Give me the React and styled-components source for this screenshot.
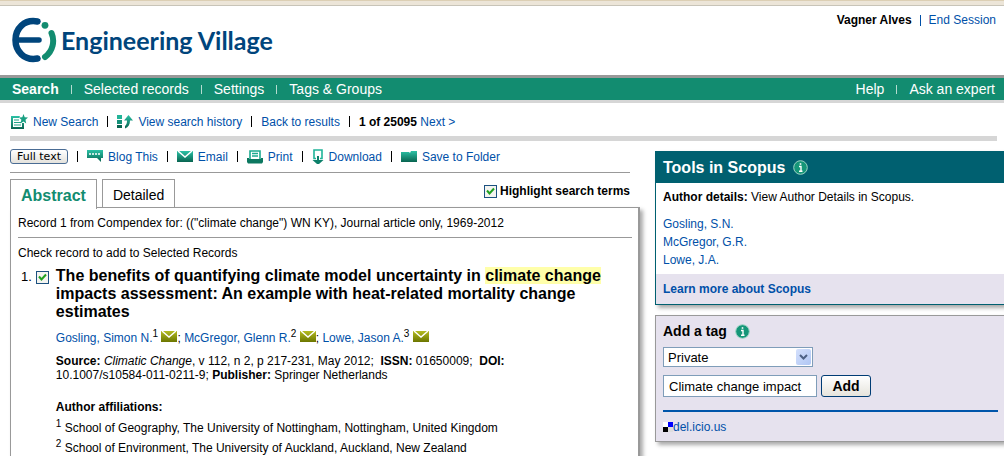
import { useState } from "react"
import styled, { createGlobalStyle } from "styled-components"

const authors = [
    { name: "Gosling, Simon N.", ref: "1" },
    { name: "McGregor, Glenn R.", ref: "2" },
    { name: "Lowe, Jason A.", ref: "3" },
]

const App = () => {
    const [highlight, setHighlight] = useState(true)
    const [tag, setTag] = useState("Climate change impact")

    return (
        <Page>
            <GlobalStyle />
            <Gradients />
            <TopStrip />
            <Header>
                <Logo href="#">
                    <LogoMark />
                    Engineering Village
                </Logo>
                <Session>
                    <b>Vagner Alves</b>
                    <Separator $color="#0050a8" />
                    <Link href="#">End Session</Link>
                </Session>
            </Header>
            <Nav>
                <NavGroup>
                    <NavLink href="#" $active>Search</NavLink>
                    <NavLink href="#">Selected records</NavLink>
                    <NavLink href="#">Settings</NavLink>
                    <NavLink href="#">Tags &amp; Groups</NavLink>
                </NavGroup>
                <NavGroup>
                    <NavLink href="#">Help</NavLink>
                    <NavLink href="#">Ask an expert</NavLink>
                </NavGroup>
            </Nav>
            <SearchBar>
                <IconLink href="#"><NewSearchIcon />New Search</IconLink>
                <Separator />
                <IconLink href="#"><HistoryIcon />View search history</IconLink>
                <Separator />
                <Link href="#">Back to results</Link>
                <Separator />
                <span><b>1 of 25095</b> <Link href="#">Next &gt;</Link></span>
            </SearchBar>
            <Columns>
                <Record>
                    <Actions>
                        <FullText type="button">Full text</FullText>
                        <Separator />
                        <IconLink href="#"><BlogIcon />Blog This</IconLink>
                        <Separator />
                        <IconLink href="#"><EmailIcon />Email</IconLink>
                        <Separator />
                        <IconLink href="#"><PrintIcon />Print</IconLink>
                        <Separator />
                        <IconLink href="#"><DownloadIcon />Download</IconLink>
                        <Separator />
                        <IconLink href="#"><FolderIcon />Save to Folder</IconLink>
                    </Actions>
                    <Tabs>
                        <Tab type="button" $active>Abstract</Tab>
                        <Tab type="button">Detailed</Tab>
                        <Highlight>
                            <Check
                                type="checkbox"
                                checked={highlight}
                                onChange={(e) => setHighlight(e.target.checked)}
                            />
                            Highlight search terms
                        </Highlight>
                    </Tabs>
                    <Panel>
                        <Query>Record 1 from Compendex for: (("climate change") WN KY), Journal article only, 1969-2012</Query>
                        <Hint>Check record to add to Selected Records</Hint>
                        <Entry>
                            <Picker>
                                1.
                                <Check type="checkbox" defaultChecked aria-label="Select record 1" />
                            </Picker>
                            <div>
                                <Title>
                                    The benefits of quantifying climate model uncertainty in <Mark $on={highlight}>climate change</Mark> impacts
                                    assessment: An example with heat-related mortality change estimates
                                </Title>
                                <Authors>
                                    {authors.map((a, i) => (
                                        <span key={a.ref}>
                                            {i > 0 && "; "}
                                            <Link href="#">{a.name}</Link>
                                            <Sup>{a.ref}</Sup> <MailIcon />
                                        </span>
                                    ))}
                                </Authors>
                                <Source>
                                    <b>Source:</b> <i>Climatic Change</i>, v 112, n 2, p 217-231, May 2012;&nbsp; <b>ISSN:</b> 01650009;&nbsp;{" "}
                                    <b>DOI:</b> <NoBreak>10.1007/s10584-011-0211-9;</NoBreak> <b>Publisher:</b> Springer Netherlands
                                </Source>
                                <Subhead>Author affiliations:</Subhead>
                                <Affiliation><Sup>1</Sup> School of Geography, The University of Nottingham, Nottingham, United Kingdom</Affiliation>
                                <Affiliation><Sup>2</Sup> School of Environment, The University of Auckland, Auckland, New Zealand</Affiliation>
                            </div>
                        </Entry>
                    </Panel>
                </Record>
                <Sidebar>
                    <Scopus>
                        <ScopusTitle>Tools in Scopus <InfoIcon /></ScopusTitle>
                        <ScopusBody>
                            <b>Author details:</b> View Author Details in Scopus.
                            <AuthorList>
                                <li><Link href="#">Gosling, S.N.</Link></li>
                                <li><Link href="#">McGregor, G.R.</Link></li>
                                <li><Link href="#">Lowe, J.A.</Link></li>
                            </AuthorList>
                        </ScopusBody>
                        <ScopusFooter><Link href="#">Learn more about Scopus</Link></ScopusFooter>
                    </Scopus>
                    <TagBox>
                        <TagTitle>Add a tag <InfoIcon /></TagTitle>
                        <SelectWrap>
                            <Select aria-label="Tag visibility" defaultValue="Private">
                                <option>Private</option>
                                <option>Public</option>
                            </Select>
                            <Arrow><ChevronIcon /></Arrow>
                        </SelectWrap>
                        <TagRow>
                            <TagInput aria-label="Tag" value={tag} onChange={(e) => setTag(e.target.value)} />
                            <AddButton type="button">Add</AddButton>
                        </TagRow>
                        <Bookmark>
                            <DeliciousIcon />
                            <Link href="#">del.icio.us</Link>
                        </Bookmark>
                    </TagBox>
                </Sidebar>
            </Columns>
        </Page>
    )
}

// shared by the toolbar and mail icons
const Gradients = () => (
    <HiddenSvg width="0" height="0" aria-hidden="true">
        <linearGradient id="teal" x1="0" y1="0" x2="0" y2="1">
            <stop offset="0" stopColor="#2cc2a6" />
            <stop offset="1" stopColor="#086450" />
        </linearGradient>
        <linearGradient id="olive" x1="0" y1="0" x2="0" y2="1">
            <stop offset="0" stopColor="#b4bc20" />
            <stop offset="1" stopColor="#6c7600" />
        </linearGradient>
    </HiddenSvg>
)

const LogoMark = () => (
    <svg width="46" height="46" viewBox="0 0 46 46" fill="none" aria-hidden="true">
        <path d="M26.5 4.5C13 2 4.500 12 4.500 23s8.500 21 22 18.500" stroke="#00457c" strokeWidth="6.500" strokeLinecap="round" />
        <path d="M5 23h23" stroke="#00457c" strokeWidth="5.500" strokeLinecap="round" />
        <circle cx="34" cy="8.300" r="3.400" fill="#128c70" />
        <path d="M40.500 16c3.500 8 1.500 18-6.500 24" stroke="#128c70" strokeWidth="6" strokeLinecap="round" />
    </svg>
)

const NewSearchIcon = () => (
    <svg width="18" height="16" viewBox="0 0 18 16" aria-hidden="true">
        <path d="M10 2H1v13h13V9h-2v4H3V4h6z" fill="url(#teal)" />
        <path d="M4 6h5M4 8.500h7M4 11h7" stroke="#20a488" strokeWidth="1.200" />
        <path d="M13.500 0l1.200 3.200 3.300.3-2.500 2.200.7 3.800-2.700-2-3.200 2 1.100-3.800L9 3.500l3.300-.3z" fill="#1aa082" />
    </svg>
)

const HistoryIcon = () => (
    <svg width="16" height="14" viewBox="0 0 16 14" aria-hidden="true">
        <path d="M0 0h5v4H0z" fill="#23b498" />
        <path d="M0 5h5v4H0z" fill="#149078" />
        <path d="M0 10h5v3H0z" fill="#086450" />
        <path d="M11.500 0L16 5.500h-3c0 4-1.500 6.500-5 8v-2.500c1.500-1 2-3 2-5.500H7z" fill="url(#teal)" />
    </svg>
)

const BlogIcon = () => (
    <svg width="16" height="13" viewBox="0 0 16 13" aria-hidden="true">
        <path d="M0 0h16v8h-2v4l-4-4H0z" fill="url(#teal)" />
        <path d="M2 4h2M5 4h2M8 4h2M11 4h2" stroke="#fff" strokeWidth="1.500" />
    </svg>
)

const EmailIcon = () => (
    <svg width="16" height="11" viewBox="0 0 16 11" aria-hidden="true">
        <path d="M0 0h16v11H0z" fill="url(#teal)" />
        <path d="M1 0l7 6 7-6" fill="none" stroke="#fff" strokeWidth="1.500" />
    </svg>
)

const PrintIcon = () => (
    <svg width="16" height="14" viewBox="0 0 16 14" aria-hidden="true">
        <path d="M3 9V1h10v8" fill="#fff" stroke="#1cab90" strokeWidth="1.600" />
        <path d="M5 3.500h6M5 6h6" stroke="#1cab90" strokeWidth="1.300" />
        <path d="M0 8h2v1h12V8h2v4l-1 1.500H1L0 12z" fill="#0c7860" />
    </svg>
)

const DownloadIcon = () => (
    <svg width="12" height="15" viewBox="0 0 12 15" aria-hidden="true">
        <path d="M4 9.500H2V1h8v8.500H8" fill="none" stroke="#20b499" strokeWidth="1.600" />
        <path d="M5 7h2v4h4.500L7 15H5L.5 11H5z" fill="#0c806a" />
    </svg>
)

const FolderIcon = () => (
    <svg width="16" height="11" viewBox="0 0 16 11" aria-hidden="true">
        <path d="M0 1h8l1 1 1-2h6v11H0z" fill="url(#teal)" />
    </svg>
)

const MailIcon = () => (
    <svg width="16" height="11" viewBox="0 0 16 11" aria-hidden="true">
        <path d="M0 0h16v11H0z" fill="url(#olive)" />
        <path d="M1 0l7 6 7-6" fill="none" stroke="#fff" strokeWidth="1.400" />
    </svg>
)

const InfoIcon = () => (
    <svg width="15" height="15" viewBox="0 0 15 15" aria-hidden="true">
        <circle cx="7.500" cy="7.500" r="6.800" fill="#159678" stroke="#9cd4c4" />
        <path d="M6 6.500h2V11M6 11.200h3.500" fill="none" stroke="#fff" strokeWidth="1.400" />
        <path d="M6.700 3.200h1.600v1.600H6.700z" fill="#fff" />
    </svg>
)

const ChevronIcon = () => (
    <svg width="9" height="6" viewBox="0 0 9 6" aria-hidden="true">
        <path d="M1 1l3.500 3.500L8 1" fill="none" stroke="#4d6185" strokeWidth="2" />
    </svg>
)

const DeliciousIcon = () => (
    <svg width="10" height="10" viewBox="0 0 10 10" aria-hidden="true">
        <path d="M0 0h5v5H0z" fill="#fff" />
        <path d="M5 0h5v5H5z" fill="#00f" />
        <path d="M0 5h5v5H0z" fill="#000" />
        <path d="M5 5h5v5H5z" fill="#ddd" />
    </svg>
)

const GlobalStyle = createGlobalStyle`
* {
    box-sizing: border-box;
}
body {
    margin: 0;
    background: #fff;
    color: #000;
    font: 12px/18px "Liberation Sans", Arial, sans-serif;
}
`

const HiddenSvg = styled.svg`
display: block;
`

const Page = styled.div`
display: flex;
flex-direction: column;
min-height: 100vh;
overflow-x: hidden;
`

const TopStrip = styled.div`
height: 6px;
background: #ece5d8;
border-top: 1px solid #dccfb4;
border-bottom: 1px solid #c8c4b8;
`

const Link = styled.a`
color: #0050a8;
text-decoration: none;
`

const Separator = styled.span`
width: 1px;
height: 11px;
background: ${(props) => props.$color || "#000"};
`

const Header = styled.header`
display: flex;
justify-content: space-between;
align-items: flex-start;
height: 69px;
padding: 5px 8px 0 11px;
`

const Logo = styled.a`
display: flex;
align-items: center;
gap: 4px;
padding-top: 6px;
color: #00457c;
font: bold 25px/46px Lato, sans-serif;
text-decoration: none;
`

const Session = styled.div`
display: flex;
align-items: center;
gap: 8px;
`

const Nav = styled.nav`
display: flex;
justify-content: space-between;
height: 28px;
padding: 0 9px 0 12px;
background: #128c70;
border-top: 3px solid #999;
border-bottom: 3px solid #d6d6d6;
`

const NavGroup = styled.div`
display: flex;
align-items: center;
`

const NavLink = styled.a`
display: flex;
align-items: center;
color: #fff;
font-size: 14px;
line-height: 22px;
font-weight: ${(props) => (props.$active ? "bold" : "normal")};
text-decoration: none;

&:not(:first-child)::before {
    content: "";
    width: 1px;
    height: 9px;
    margin: 0 12px;
    background: #b4dcd0;
}
`

const SearchBar = styled.div`
display: flex;
align-items: center;
gap: 9px;
height: 38px;
margin: 0 7px 0 10px;
padding-top: 4px;
border-bottom: 5px solid #d6d6d6;
`

const IconLink = styled(Link)`
display: flex;
align-items: center;
gap: 5px;
`

const Columns = styled.main`
display: flex;
flex: 1;
gap: 15px;
padding-left: 10px;
`

const Record = styled.section`
display: flex;
flex-direction: column;
flex: 1;
min-width: 0;
`

const Actions = styled.div`
display: flex;
align-items: center;
gap: 9px;
height: 32px;
margin-right: 10px;
border-bottom: 1px solid #999;
`

const FullText = styled.button`
height: 15px;
padding: 0 6px;
border: 1px solid #4a6c94;
border-radius: 3px;
background: linear-gradient(#fff, #e4e2dc);
color: #000;
font: 11px/13px "DejaVu Sans", Verdana, sans-serif;
`

const Tabs = styled.div`
display: flex;
gap: 5px;
height: 34px;
padding: 6px 10px 0 0;
`

const Tab = styled.button`
position: relative;
z-index: 1;
height: ${(props) => (props.$active ? "30px" : "29px")};
padding: 2px 10px 0;
border: 1px solid #999;
border-bottom: ${(props) => (props.$active ? "none" : "1px solid #999")};
background: #fff;
color: ${(props) => (props.$active ? "#128c70" : "#000")};
font: ${(props) => (props.$active ? "bold 16px" : "14px")} "Liberation Sans", Arial, sans-serif;
`

const Highlight = styled.label`
display: flex;
align-items: center;
gap: 3px;
height: 24px;
margin-left: auto;
font-weight: bold;
`

const Check = styled.input`
appearance: none;
width: 13px;
height: 13px;
margin: 0;
border: 1px solid #1c5180;
background: #f4f4f0;

&:checked {
    background: #f4f4f0 url("data:image/svg+xml,%3Csvg xmlns='http://www.w3.org/2000/svg' viewBox='0 0 11 11'%3E%3Cpath d='M2 4.500l2.500 3L9 2.500' fill='none' stroke='%2321a121' stroke-width='2'/%3E%3C/svg%3E");
}
`

const Panel = styled.div`
flex: 1;
padding: 6px 6px 0 7px;
border: 1px solid #999;
border-right-width: 2px;
border-bottom: none;
box-shadow: 3px 3px 4px #aaa;
`

const Query = styled.div`
padding-bottom: 5px;
border-bottom: 1px solid #999;
`

const Hint = styled.div`
padding-top: 6px;
`

const Entry = styled.div`
display: flex;
gap: 7px;
padding: 5px 20px 0 3px;
`

const Picker = styled.div`
display: flex;
gap: 4px;
align-items: center;
height: 20px;
font-size: 13px;
`

const Title = styled.h1`
margin: 0;
font-size: 16px;
line-height: 18px;
`

const Mark = styled.mark`
color: inherit;
background: ${(props) => (props.$on ? "#ffffaa" : "transparent")};
`

const Authors = styled.div`
margin-top: 8px;
`

const Sup = styled.sup`
font-size: 10px;
line-height: 0;
`

const Source = styled.div`
margin-top: 7px;
line-height: 14px;
`

const NoBreak = styled.span`
white-space: nowrap;
`

const Subhead = styled.h2`
margin: 16px 0 2px;
font-size: 12px;
line-height: 18px;
`

const Affiliation = styled.div`
line-height: 20px;
`

const Sidebar = styled.aside`
display: flex;
flex-direction: column;
gap: 10px;
flex: 0 0 349px;
padding-top: 10px;
`

const Scopus = styled.section`
border: 1px solid #006070;
border-right: none;
box-shadow: 3px 3px 4px #aaa;
`

const ScopusTitle = styled.h2`
display: flex;
align-items: center;
gap: 8px;
height: 31px;
margin: 0;
padding: 0 7px;
background: #006070;
color: #fff;
font-size: 16px;
`

const ScopusBody = styled.div`
padding: 5px 7px;
`

const AuthorList = styled.ul`
margin: 9px 0 0;
padding: 0;
list-style: none;
`

const ScopusFooter = styled.div`
padding: 6px 7px;
background: #e6e2ee;
font-weight: bold;
`

const TagBox = styled.section`
padding: 6px 6px 5px 7px;
border: 1px solid #999;
border-right: none;
background: #e6e2ee;
box-shadow: 3px 3px 4px #aaa;
`

const TagTitle = styled.h2`
display: flex;
align-items: center;
gap: 8px;
margin: 0 0 7px;
font-size: 14px;
line-height: 18px;
`

const SelectWrap = styled.div`
position: relative;
width: 150px;
height: 20px;
`

const Select = styled.select`
appearance: none;
display: block;
width: 100%;
height: 20px;
padding: 0 4px;
border: 1px solid #7f9db9;
border-radius: 0;
background: #fff;
color: #000;
font: 13px "Liberation Sans", Arial, sans-serif;
`

const Arrow = styled.span`
position: absolute;
top: 2px;
right: 2px;
display: flex;
align-items: center;
justify-content: center;
width: 15px;
height: 16px;
border-radius: 2px;
background: linear-gradient(135deg, #d4e0fc, #b0c6f4);
pointer-events: none;
`

const TagRow = styled.div`
display: flex;
gap: 4px;
padding: 8px 0 13px;
border-bottom: 2px solid #0055aa;
`

const TagInput = styled.input`
width: 154px;
height: 22px;
padding: 0 5px;
border: 1px solid #7f9db9;
background: #fff;
color: #000;
font: 13px "Liberation Sans", Arial, sans-serif;
`

const AddButton = styled.button`
width: 50px;
height: 22px;
padding: 0;
border: 1px solid #003c74;
border-radius: 3px;
background: linear-gradient(#fff, #e6e4dc);
color: #000;
font: bold 14px "Liberation Sans", Arial, sans-serif;
`

const Bookmark = styled.div`
display: flex;
align-items: center;
margin-top: 6px;
`

export default App
